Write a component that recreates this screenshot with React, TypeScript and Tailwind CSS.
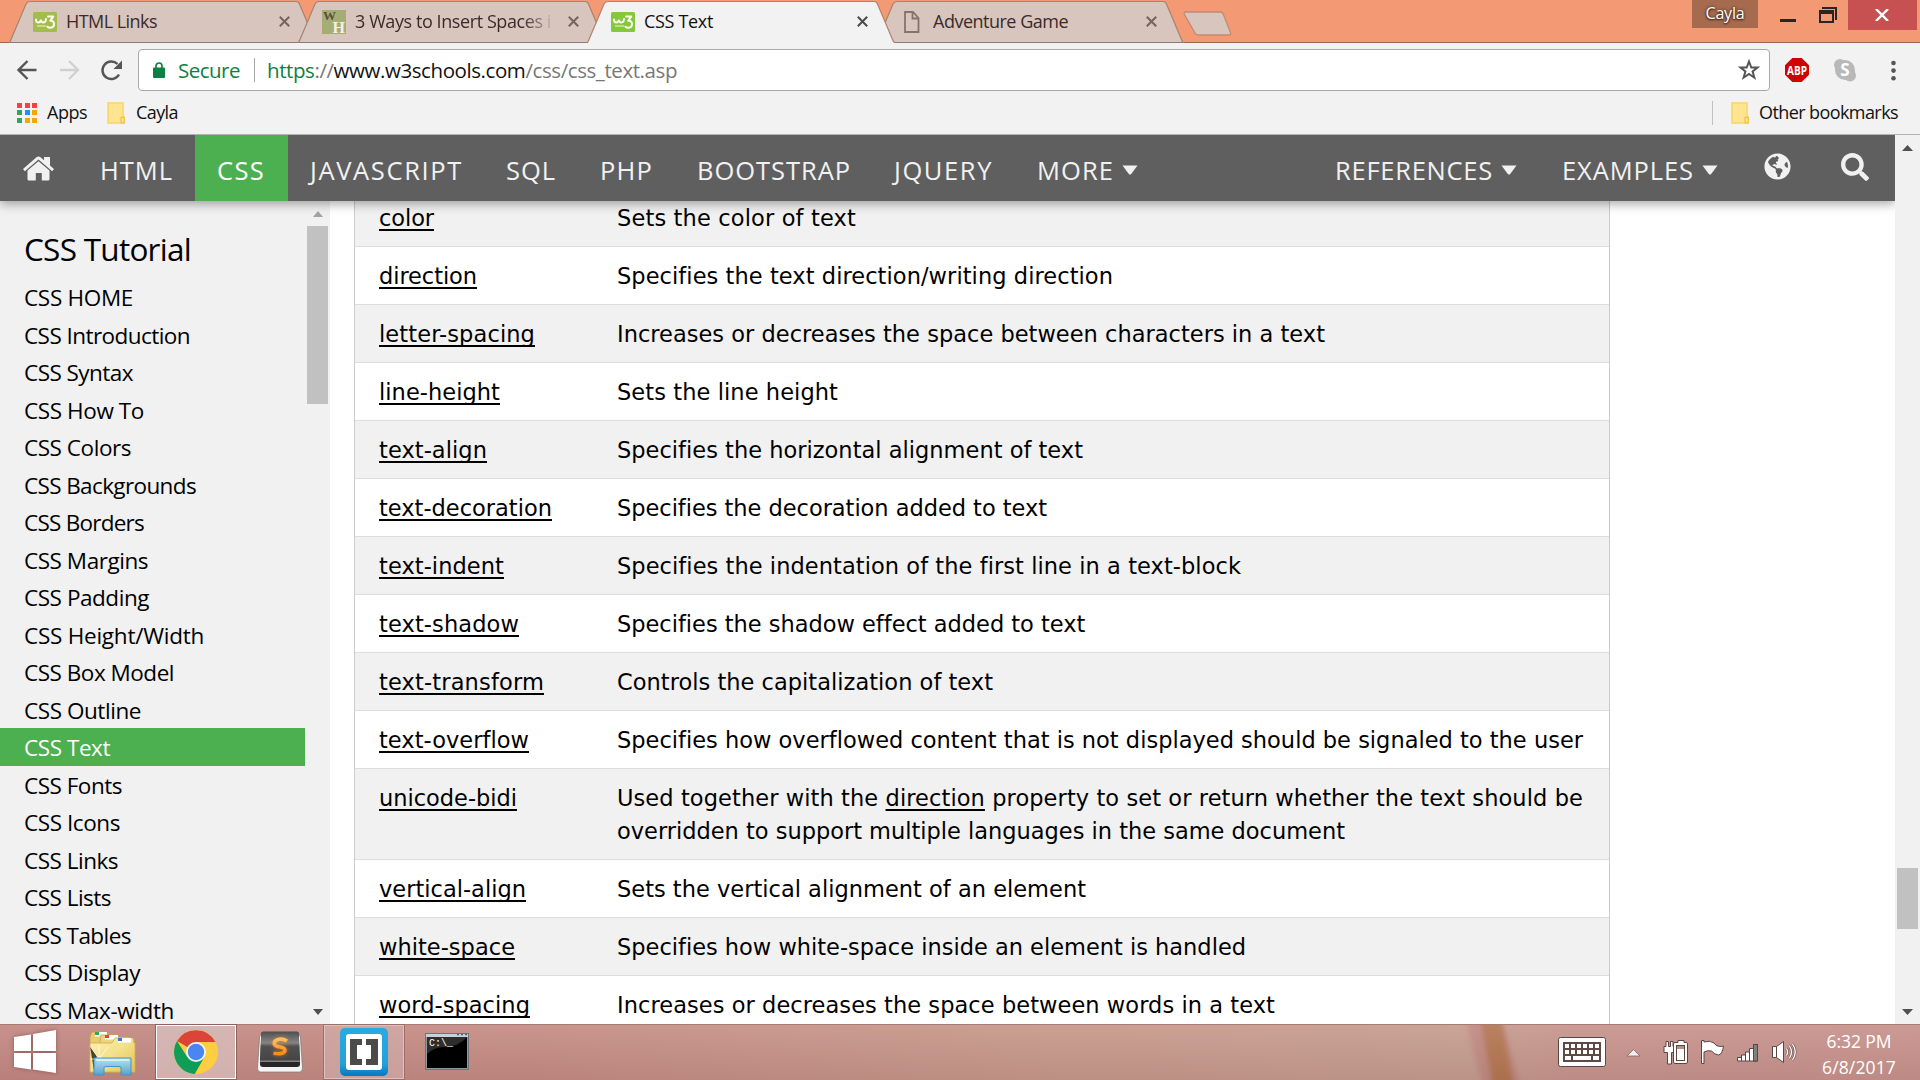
import { useLayoutEffect, useRef, useState, type ReactNode } from 'react';
import { FaSearch, FaGlobeAmericas } from 'react-icons/fa';

/* Text whose tracking is adjusted so the run is exactly w pixels wide. */
function Fit({ w, className = '', children }: { w: number; className?: string; children: ReactNode }) {
  const ref = useRef<HTMLSpanElement>(null);
  const [ls, setLs] = useState(0);
  useLayoutEffect(() => {
    const el = ref.current;
    if (!el) return;
    el.style.letterSpacing = '0px';
    const natural = el.getBoundingClientRect().width;
    const next = (w - natural) / (el.textContent || ' ').length;
    el.style.letterSpacing = `${next}px`;
    setLs(next);
  }, [w]);
  return (
    <span ref={ref} className={`inline-block whitespace-nowrap ${className}`} style={{ letterSpacing: `${ls}px` }}>
      {children}
    </span>
  );
}

function W3Icon({ faded = false }: { faded?: boolean }) {
  return (
    <svg width="24" height="20" viewBox="0 0 24 20" className="shrink-0">
      <rect width="24" height="20" rx="1.5" fill={faded ? '#a2bd4e' : '#84c83c'} />
      <path d="M3 7.5q0 3 2.2 3T8 7.7q.2 2.800 2.500 2.800T13 7" fill="none" stroke="#fffbee" strokeWidth="1.900" strokeLinecap="round" />
      <path d="M15 4.600h5.200l-3 4.200q3.800 0 3.800 3.300 0 3.600-3.600 3.600-1.800 0-3-1" fill="none" stroke="#fffbee" strokeWidth="2" strokeLinecap="round" strokeLinejoin="round" />
      <path d="M4 14h9" stroke="#fffbee" strokeWidth="1.100" opacity=".8" />
    </svg>
  );
}

function WikiIcon() {
  return (
    <div className="flex h-6 w-6 shrink-0 flex-col bg-[#a4ae73] px-px font-['Liberation_Serif'] font-bold">
      <span className="h-[11px] self-start text-[13px] leading-[11px] text-[#5c4f3c]">W</span>
      <span className="h-[13px] self-end text-[16px] leading-[13px] text-[#fbeee2]">H</span>
    </div>
  );
}

function PageIcon() {
  return (
    <svg width="24" height="24" viewBox="0 0 24 24" className="shrink-0">
      <path d="M5 2h8l5.500 6v14H5zM12.500 2v6.500h6" fill="none" stroke="#84736f" strokeWidth="1.800" />
    </svg>
  );
}

function Tab({ title, w, icon, active = false, first = false }: { title: string; w: number; icon: ReactNode; active?: boolean; first?: boolean }) {
  return (
    <div className={`relative h-[43px] w-[308px] shrink-0 ${first ? '' : '-ml-[19px]'} ${active ? 'z-10' : ''}`}>
      <svg width="308" height="43" viewBox="0 0 308 43" className="absolute inset-0">
        <path
          d="M0 43 Q1 42 2 39.500 L17 4 Q18.500 1.500 21 1.500 H287 Q289.500 1.500 290.500 4 L305.500 39.500 Q306.500 42 308 43 Z"
          fill={active ? '#f2f2f2' : '#d8c5bd'}
        />
        <path
          d="M0 43 Q1 42 2 39.500 L17 4 Q18.500 1.500 21 1.500 H287 Q289.500 1.500 290.500 4 L305.500 39.500 Q306.500 42 308 43"
          fill="none"
          stroke={active ? '#b5826d' : '#a9836f'}
          strokeWidth="1.200"
        />
        {!active && <path d="M1 42.500H307" stroke="#8f7b74" />}
      </svg>
      <div className="relative flex h-[43px] items-center pl-6">
        <div className="flex h-6 w-6 items-center">{icon}</div>
        <div className={`ml-[9px] w-[197px] overflow-hidden text-[18px] leading-[43px] ${active ? 'text-[#111]' : 'text-[#3a2b2a]'} ${w > 190 ? '[mask-image:linear-gradient(to_right,#000_168px,transparent_200px)]' : ''}`}>
          <Fit w={w}>{title}</Fit>
        </div>
        <svg width="11" height="11" viewBox="0 0 11 11" className="ml-[16px]">
          <path d="M.8.800l9.400 9.400M10.200.800L.8 10.200" stroke={active ? '#4c4c4c' : '#75635f'} strokeWidth="2" />
        </svg>
      </div>
    </div>
  );
}

function Folder() {
  return (
    <svg width="18" height="22" viewBox="0 0 18 22" className="shrink-0">
      <path d="M1 1h15v14h1.200v6H1z" fill="#ffe491" stroke="#fad55f" strokeWidth="1.500" />
      <path d="M14 20.800v-5.500h3.200v5.500z" fill="#ffe491" stroke="#eec24a" strokeWidth="1.200" />
    </svg>
  );
}

const appColors = [
  'bg-[#fa4238]', 'bg-[#fa4238]', 'bg-[#fa4238]',
  'bg-[#31a65a]', 'bg-[#2290f8]', 'bg-[#f8a50c]',
  'bg-[#31a65a]', 'bg-[#f8a50c]', 'bg-[#f8a50c]',
];

function Chrome() {
  return (
    <header className="bg-[#f2f2f2]">
      <div className="flex h-[43px] bg-[#f39973] shadow-[inset_0_-1px_0_#a0654c] pl-[9px]">
        <Tab first title="HTML Links" w={91} icon={<W3Icon faded />} />
        <Tab title="3 Ways to Insert Spaces i" w={196} icon={<WikiIcon />} />
        <Tab active title="CSS Text" w={69} icon={<W3Icon />} />
        <Tab title="Adventure Game" w={135} icon={<PageIcon />} />
        <svg width="50" height="25" viewBox="0 0 50 25" className="mt-[10.500px] ml-[-1px] shrink-0">
          <path d="M2.500 1h35q2 0 2.700 2l7.300 18.500q1 2.500-1.500 2.500H15q-2 0-3-2L1.500 3.500Q.5 1 2.500 1z" fill="#d8c5bd" stroke="#c18b74" strokeWidth="1.300" />
        </svg>
        <div className="ml-auto flex h-[30px]">
          <div className="h-7 w-[66px] bg-[#a66a4e] text-center text-[16px] leading-[27px] text-white [text-shadow:0_0_3px_#3a2015,0_1px_2px_#3a2015]">
            <Fit w={39}>Cayla</Fit>
          </div>
          <div className="ml-[22px] mt-[19px] h-[3px] w-4 bg-[#262626]" />
          <svg width="18" height="16" viewBox="0 0 18 16" className="ml-[23px] mt-[7px]">
            <path d="M3 1h14v12" fill="none" stroke="#262626" strokeWidth="2" />
            <path d="M0 3h15v13H0zM2 7v7h11V7z" fill="#262626" fillRule="evenodd" />
          </svg>
          <div className="ml-[11px] mr-[3px] flex h-[30px] w-[69px] items-center justify-center bg-[#c75050]">
            <svg width="14" height="12" viewBox="0 0 14 12" className="ml-[-1px]"><path d="M1 0l12 12M13 0L1 12" stroke="#fff" strokeWidth="2.400" /></svg>
          </div>
        </div>
      </div>

      <div className="flex h-[55px] items-start pt-[6px]">
        <svg width="138" height="42" viewBox="0 0 138 42" fill="none" className="shrink-0">
          <path d="M36.500 21H18.500M27.500 12l-9 9 9 9" stroke="#555" strokeWidth="2.400" />
          <path d="M60 21h18M69 12l9 9-9 9" stroke="#d0d0d0" strokeWidth="2.400" />
          <path d="M119 25.500A8.800 8.800 0 1 1 117.500 15" stroke="#555" strokeWidth="2.400" />
          <path d="M122 11.500v8.500h-8.500z" fill="#555" />
        </svg>
        <div className="flex h-[42px] w-[1632px] items-center rounded-[4px] border border-[#a9a9a9] bg-white text-[20.500px] leading-[40px]">
          <svg width="12" height="16" viewBox="0 0 12 16" className="ml-[14px]">
            <path d="M3 7V4a3 3 0 0 1 6 0v3" fill="none" stroke="#0b8043" strokeWidth="1.700" />
            <rect y="5.500" width="12" height="10.500" rx="1" fill="#0b8043" />
          </svg>
          <Fit w={62} className="ml-[13px] text-[#0b8043]">Secure</Fit>
          <div className="ml-[14px] h-6 w-px bg-[#a8a8a8]" />
          <Fit w={410} className="ml-[12px] text-[#777]">
            <span className="text-[#0b8043]">https</span>://<span className="text-[#111]">www.w3schools.com</span>/css/css_text.asp
          </Fit>
          <svg width="22" height="22" viewBox="0 0 22 22" className="ml-auto mr-[9px]">
            <path d="M11 2.500l2.300 6h6.200l-4.900 3.900 1.800 6.300L11 15l-5.400 3.700 1.800-6.300L2.500 8.500h6.200z" fill="none" stroke="#555" strokeWidth="2" />
          </svg>
        </div>
        <svg width="150" height="42" viewBox="0 0 150 42" className="shrink-0">
          <path d="M22.300 9h9.400l7.300 7.300v9.400L31.700 33h-9.400L15 25.700v-9.400z" fill="#cf0202" />
          <text x="27" y="26" textAnchor="middle" textLength="20" lengthAdjust="spacingAndGlyphs" fontSize="13" fontWeight="700" fontFamily="Open Sans, sans-serif" fill="#fff">ABP</text>
          <circle cx="75" cy="21" r="10" fill="#b8b8b8" />
          <circle cx="70" cy="16" r="6" fill="#b8b8b8" />
          <circle cx="80" cy="26.500" r="6" fill="#b8b8b8" />
          <text x="75" y="27" textAnchor="middle" fontSize="17" fontWeight="700" fontFamily="Open Sans, sans-serif" fill="#fff">S</text>
          <circle cx="123.500" cy="14" r="2.300" fill="#555" />
          <circle cx="123.500" cy="21.600" r="2.300" fill="#555" />
          <circle cx="123.500" cy="29.200" r="2.300" fill="#555" />
        </svg>
      </div>

      <div className="flex h-[37px] items-center border-b border-[#b3b3b3] pb-[7px] text-[18px] leading-[26px] text-[#111]">
        <div className="ml-[17px] grid grid-cols-3 gap-x-[2.500px] gap-y-[2.500px]">
          {appColors.map((c, i) => <div key={i} className={`h-[5px] w-[5px] ${c}`} />)}
        </div>
        <Fit w={40} className="ml-[10px] mb-[2px]">Apps</Fit>
        <div className="ml-[20px] flex items-center gap-[11px]"><Folder /><Fit w={42} className="mb-[2px]">Cayla</Fit></div>
        <div className="ml-auto mr-[22px] flex items-center">
          <div className="mr-[18px] h-6 w-px bg-[#c0c0c0]" />
          <Folder />
          <Fit w={139} className="ml-[10px] mb-[2px]">Other bookmarks</Fit>
        </div>
      </div>
    </header>
  );
}

function Caret() {
  return (
    <svg width="16" height="10" viewBox="0 0 16 10" className="mt-[-1px] shrink-0">
      <path d="M.5.500h15L9 9.200q-1 .8-2 0z" fill="#f1f1f1" />
    </svg>
  );
}

function NavItem({ label, box, w, active, caret }: { label: string; box: string; w: number; active?: boolean; caret?: boolean }) {
  return (
    <div className={`flex h-[66px] shrink-0 items-center gap-[8px] pl-[22px] pt-[5px] ${box} ${active ? 'bg-[#4caf50] text-white' : ''}`}>
      <Fit w={w}>{label}</Fit>
      {caret && <Caret />}
    </div>
  );
}

function Nav() {
  return (
    <nav className="relative z-20 flex h-[66px] w-[1895px] bg-[#5f5f5f] text-[25.500px] leading-[61px] text-[#f1f1f1] shadow-[0_3px_10px_rgba(0,0,0,0.350)]">
      <div className="w-[78px] shrink-0 pl-[23px] pt-[21px]">
        <svg width="31" height="25" viewBox="0 0 31 25" fill="#f1f1f1">
          <path d="M0 13L13.500 1.200q2-1.600 4 0L21 4.200V1h6v8.500L31 13l-1.800 2.200L15.500 3.500 1.800 15.200z" />
          <path d="M4.500 14.500L15.500 5.300l11 9.200V23q0 1.500-1.500 1.500h-6.200V17h-6v7.500H6q-1.500 0-1.500-1.500z" />
        </svg>
      </div>
      <NavItem label="HTML" box="w-[117px]" w={73} />
      <NavItem label="CSS" box="w-[93px]" w={48} active />
      <NavItem label="JAVASCRIPT" box="w-[196px]" w={153} />
      <NavItem label="SQL" box="w-[94px]" w={50} />
      <NavItem label="PHP" box="w-[97px]" w={53} />
      <NavItem label="BOOTSTRAP" box="w-[197px]" w={154} />
      <NavItem label="JQUERY" box="w-[143px]" w={99} />
      <NavItem label="MORE" box="w-[150px]" w={77} caret />
      <NavItem label="REFERENCES" box="ml-auto w-[227px]" w={158} caret />
      <NavItem label="EXAMPLES" box="w-[183px]" w={132} caret />
      <FaGlobeAmericas className="ml-[41px] mt-[18px] h-[27px] w-[27px]" />
      <FaSearch className="ml-[50px] mr-[26px] mt-[18px] h-[28px] w-[28px]" />
    </nav>
  );
}

const lessons: [string, number][] = [
  ['CSS HOME', 109], ['CSS Introduction', 166], ['CSS Syntax', 109], ['CSS How To', 120], ['CSS Colors', 107],
  ['CSS Backgrounds', 172], ['CSS Borders', 120], ['CSS Margins', 124], ['CSS Padding', 125], ['CSS Height/Width', 180],
  ['CSS Box Model', 150], ['CSS Outline', 117], ['CSS Text', 86], ['CSS Fonts', 98], ['CSS Icons', 96], ['CSS Links', 94],
  ['CSS Lists', 87], ['CSS Tables', 107], ['CSS Display', 116], ['CSS Max-width', 150],
];

function Sidebar() {
  return (
    <aside className="flex h-[823px] w-[330px] shrink-0 overflow-hidden bg-[#f1f1f1]">
      <div className="w-[305px] shrink-0 pt-[22px] text-black">
        <h2 className="h-[55px] pl-6 text-[31.500px] leading-[52px]"><Fit w={167}>CSS Tutorial</Fit></h2>
        {lessons.map(([label, w]) => (
          <div key={label} className={`h-[37.500px] pl-6 text-[22.500px] leading-[39.500px] ${label === 'CSS Text' ? 'bg-[#4caf50] text-white' : ''}`}>
            <Fit w={w}>{label}</Fit>
          </div>
        ))}
      </div>
      <div className="flex w-[25px] flex-col items-center pt-[10px] pb-[9px]">
        <svg width="10" height="6" viewBox="0 0 10 6"><path d="M0 6L5 0l5 6z" fill="#a3a3a3" /></svg>
        <div className="mt-[9px] h-[178px] w-[21px] shrink-0 bg-[#c1c1c1]" />
        <svg width="10" height="6" viewBox="0 0 10 6" className="mt-auto"><path d="M0 0h10L5 6z" fill="#505050" /></svg>
      </div>
    </aside>
  );
}

const link = 'underline decoration-2 underline-offset-[3px] [text-decoration-skip-ink:none]';

const rows: [string, number, string, number][] = [
  ['color', 55, 'Sets the color of text', 239],
  ['direction', 98, 'Specifies the text direction/writing direction', 496],
  ['letter-spacing', 156, 'Increases or decreases the space between characters in a text', 708],
  ['line-height', 121, 'Sets the line height', 221],
  ['text-align', 108, 'Specifies the horizontal alignment of text', 466],
  ['text-decoration', 173, 'Specifies the decoration added to text', 430],
  ['text-indent', 125, 'Specifies the indentation of the first line in a text-block', 624],
  ['text-shadow', 140, 'Specifies the shadow effect added to text', 468],
  ['text-transform', 165, 'Controls the capitalization of text', 376],
  ['text-overflow', 150, 'Specifies how overflowed content that is not displayed should be signaled to the user', 966],
  ['unicode-bidi', 138, '', 0],
  ['vertical-align', 147, 'Sets the vertical alignment of an element', 469],
  ['white-space', 136, 'Specifies how white-space inside an element is handled', 629],
  ['word-spacing', 151, 'Increases or decreases the space between words in a text', 658],
];

function PropertyTable() {
  return (
    <div className="-mt-[12px] ml-6 w-[1256px] shrink-0 border-x border-[#ccc] font-['DejaVu_Sans',sans-serif] text-[22.500px] leading-[33px] text-black">
      {rows.map(([name, nw, desc, dw], i) => (
        <div key={name} className={`flex border-b border-[#ddd] pt-[13px] pb-[11px] pl-6 ${i % 2 === 0 ? 'bg-[#f1f1f1]' : 'bg-white'}`}>
          <div className="w-[238px] shrink-0"><Fit w={nw} className={link}>{name}</Fit></div>
          {desc ? (
            <Fit w={dw}>{desc}</Fit>
          ) : (
            <div className="flex flex-col">
              <Fit w={966}>
                Used together with the <span className={link}>direction</span> property to set or return whether the text should be
              </Fit>
              <Fit w={728} className="self-start">overridden to support multiple languages in the same document</Fit>
            </div>
          )}
        </div>
      ))}
    </div>
  );
}

function StartIcon() {
  return (
    <svg width="46" height="46" viewBox="0 0 46 46" className="drop-shadow-[0_0_2px_rgba(90,40,40,0.500)]">
      <path d="M2 8l17-2.500V22H2zM21 5l23-4v21H21zM2 24h17v16.500L2 38zM21 24h23v20l-23-3.500z" fill="#fff" />
    </svg>
  );
}

function ExplorerIcon() {
  return (
    <svg width="48" height="46" viewBox="0 0 48 46">
      <defs>
        <linearGradient id="fold" x1="0" y1="0" x2="1" y2="1"><stop offset="0" stopColor="#fff0b0" /><stop offset=".5" stopColor="#f3e08a" /><stop offset="1" stopColor="#e3c050" /></linearGradient>
        <linearGradient id="stand" x1="0" y1="0" x2="0" y2="1"><stop offset="0" stopColor="#b6e2ee" /><stop offset="1" stopColor="#4ca4d8" /></linearGradient>
      </defs>
      <path d="M2 42V7l2-5h14l3 5h20v35z" fill="#e8cd70" stroke="#c7a34a" strokeWidth=".8" />
      <rect x="7" y="2" width="12" height="4.500" fill="#fff" /><rect x="7" y="2" width="4" height="3" fill="#35a853" />
      <path d="M12 11l1-6h14l2 4h17v9H12z" fill="#edd57e" stroke="#c7a34a" strokeWidth=".8" />
      <rect x="17" y="5" width="13" height="4.500" fill="#fff" /><rect x="17" y="5" width="4" height="3" fill="#e8432e" />
      <path d="M2 13h22l3-5h18l1 5h1v29H2z" fill="url(#fold)" stroke="#cfae52" strokeWidth=".8" />
      <rect x="30" y="8" width="13" height="4.500" fill="#fff" /><rect x="30" y="8" width="4" height="3" fill="#2c7fd0" />
      <path d="M2 16L11 29 6 41M11 29L20 17M11 29L11 15M11 29H2" stroke="#fff" strokeWidth=".9" opacity=".7" />
      <circle cx="11" cy="29" r="3" fill="#fff" opacity=".7" />
      <path d="M6 28h37v17H33v-7q0-1.500-2-1.500H18q-2 0-2 1.500v7H6z" fill="url(#stand)" stroke="#3e93c4" strokeWidth="1" opacity=".95" />
      <path d="M8 30h33" stroke="#e4f7fa" strokeWidth="1.500" />
    </svg>
  );
}

function ChromeIcon() {
  return (
    <svg width="44" height="44" viewBox="0 0 44 44">
      <circle cx="22" cy="22" r="22" fill="#ffcd40" />
      <path d="M22 22L3 11A22 22 0 0 1 41.500 12H22z" fill="#db4437" />
      <path d="M3 11A22 22 0 0 0 21 44L30.700 27 22 22 13.300 27z" fill="#0f9d58" />
      <path d="M22 12h19.500l-11 15L21 44a22 22 0 0 0 19.500-32z" fill="#ffcd40" />
      <circle cx="22" cy="22" r="10" fill="#f4f4f4" />
      <circle cx="22" cy="22" r="8.200" fill="#4a86f0" />
    </svg>
  );
}

function SublimeIcon() {
  return (
    <svg width="46" height="42" viewBox="0 0 46 42">
      <defs>
        <linearGradient id="key" x1="0" y1="0" x2="0" y2="1"><stop offset="0" stopColor="#505050" /><stop offset=".38" stopColor="#858585" /><stop offset=".5" stopColor="#505050" /><stop offset="1" stopColor="#444" /></linearGradient>
        <linearGradient id="ess" x1="0" y1="0" x2="0" y2="1"><stop offset="0" stopColor="#ffbe62" /><stop offset="1" stopColor="#ff8a10" /></linearGradient>
      </defs>
      <path d="M4 4h38q1.200 0 1.400 2L45.500 37q0 4-3 4H3.500q-3 0-3-4L2.600 6Q2.800 4 4 4z" fill="#f4f4f4" stroke="#777" strokeWidth=".7" />
      <path d="M6 .800h34q1.700 0 1.800 2L43 33q0 3-3 3H6q-3 0-3-3L4.200 2.800Q4.300.8 6 .800z" fill="#262626" />
      <path d="M6 .800h34q1.700 0 1.800 2L42.800 30H3.200L4.200 2.800Q4.300.8 6 .800z" fill="url(#key)" />
      <path d="M3.200 30.200h39.600" stroke="#aaa" strokeWidth="1" />
      <path d="M30 10q-4.500-2.800-9-1.500-4.200 1.500-3.700 4.500.5 2.200 5.500 3 5.500.9 5.200 3.700-.8 4.200-11.500 2.500" fill="none" stroke="url(#ess)" strokeWidth="3.600" className="drop-shadow-[0_0_2px_rgba(255,140,30,0.600)]" />
    </svg>
  );
}

function BracketsIcon() {
  return (
    <svg width="48" height="48" viewBox="0 0 48 48">
      <defs><linearGradient id="br" x1="0" y1="0" x2="0" y2="1"><stop offset="0" stopColor="#29abe2" /><stop offset=".75" stopColor="#22a0da" /><stop offset="1" stopColor="#0a76bd" /></linearGradient></defs>
      <rect width="48" height="48" rx="5" fill="url(#br)" />
      <rect x="6" y="6" width="36" height="36" rx="3" fill="#fff" />
      <path d="M10 11h12v6h-5v14h5v6H10zM38 11H26v6h5v14h-5v6h12z" fill="#4b4b4b" />
    </svg>
  );
}

function TerminalIcon() {
  return (
    <svg width="44" height="37" viewBox="0 0 44 37">
      <rect x=".5" y=".5" width="43" height="36" fill="#8e979c" stroke="#6f7478" />
      <rect x="1" y="1" width="42" height="3" fill="#c5d3dc" />
      <path d="M32 1.500h2M36 1.500h2M40 1.500h2" stroke="#52606a" strokeWidth="1.500" />
      <rect x="2" y="4" width="40" height="31" fill="#000" />
      <path d="M2 4h40Q34 14 18 14 8 15 2 21z" fill="#2d2d2d" />
      <text x="4" y="13" fontSize="10" fontFamily="Liberation Mono, monospace" fill="#fff" textLength="24">C:\_</text>
    </svg>
  );
}

function Tray() {
  return (
    <svg width="240" height="32" viewBox="0 0 240 32" className="shrink-0">
      <rect x=".5" y="1.500" width="47" height="29" rx="2" fill="#fff" stroke="#5c4541" />
      <rect x="5" y="6" width="38" height="20" fill="#5f4945" />
      {[0, 1, 2, 3, 4, 5].map((i) => <rect key={i} x={7 + i * 6} y="8" width="4" height="4" fill="#fff" />)}
      {[0, 1, 2, 3, 4, 5].map((i) => <rect key={i} x={7 + i * 6} y="14" width="4" height="4" fill="#fff" />)}
      <path d="M7 20h6v4H7zM15 20h18v4H15zM35 20h6v4h-6z" fill="#fff" />
      <path d="M69 20l6.500-6.500 6.500 6.500z" fill="#f2eef0" stroke="#80646a" strokeWidth=".8" />
      <path d="M108 5.500h2.500v5h2v-5h2.500v5h2v6h-3.500v11.500h-4V16.500h-3.500v-6h2z" fill="#fff" stroke="#5c4541" />
      <path d="M120 4.500h6v2h2.500q1 0 1 1.500v18q0 1.500-1.500 1.500H117q-1.500 0-1.500-1.500V8q0-1.500 1.500-1.500h3z" fill="#fff" stroke="#5c4541" />
      <rect x="118.500" y="9.500" width="8" height="15" fill="#fff" stroke="#5c4541" /><rect x="119" y="10" width="7" height="3" fill="#b98c86" />
      <path d="M143.500 4.500h2.500v1.500q6-2 10 1 2 3 4 3 3 1 5.500 0-1 8-5 9-4-.5-7-4-4-1-7.500 1v11.500h-2.500z" fill="#fff" stroke="#5c4541" />
      <path d="M179.500 21.500h4v-2.500h4v-3h4v-3.500h4v-4h4v16.500h-20z" fill="#fff" stroke="#5c4541" />
      <path d="M183.500 21v4M187.500 18v7M191.500 15v10" stroke="#5c4541" />
      <rect x="195.500" y="8.500" width="4" height="16.500" fill="#808080" stroke="#5c4541" />
      <path d="M214.500 10.500h4l7-5v21l-7-5h-4z" fill="#fff" stroke="#5c4541" />
      <path d="M218.500 10.500v11" stroke="#5c4541" />
      <path d="M228.500 12.500q2 3.500 0 7M231.500 10q4 6 0 12M234.500 8q5.500 8 0 16" fill="none" stroke="#715650" strokeWidth="2.600" />
      <path d="M228.500 12.500q2 3.500 0 7M231.500 10q4 6 0 12M234.500 8q5.500 8 0 16" fill="none" stroke="#fff" strokeWidth="1.300" />
    </svg>
  );
}

function Taskbar() {
  return (
    <footer className="relative flex h-14 shrink-0 items-center overflow-hidden bg-[linear-gradient(90deg,#c08781_0%,#c28b83_28%,#c49889_55%,#c39d8f_76%,#c4938c_82%,#c5918b_100%)]">
      <svg width="80" height="56" viewBox="0 0 80 56" className="absolute left-[1455px] top-0">
        <defs><filter id="soft" x="-50%" y="-10%" width="200%" height="120%"><feGaussianBlur stdDeviation="2.500" /></filter></defs>
        <path d="M10 -6h36l20 68H28z" fill="#b97a77" opacity=".55" filter="url(#soft)" />
        <path d="M25 -6h21l13 68H38z" fill="#b07450" filter="url(#soft)" />
      </svg>
      <div className="absolute inset-0 border-t border-[#a97b76] bg-[linear-gradient(180deg,rgba(255,220,215,0.120),rgba(120,70,70,0.100))]" />
      <div className="relative flex h-full flex-1 items-center">
        <div className="ml-[12px]"><StartIcon /></div>
        <div className="ml-[30px] mt-[1px]"><ExplorerIcon /></div>
        <div className="ml-[19px] flex h-14 w-[82px] items-center justify-center border border-[#8d6360]">
          <div className="flex h-[54px] w-[80px] items-center justify-center border border-white bg-[#d9c2c0]/75"><ChromeIcon /></div>
        </div>
        <div className="ml-[20px] mt-[-1px]"><SublimeIcon /></div>
        <div className="ml-[20px] flex h-14 w-[82px] items-center justify-center border border-[#9d6f6b]">
          <div className="flex h-[54px] w-[80px] items-center justify-center border border-[#dfc0be] bg-[#d3b3b0]/60"><BracketsIcon /></div>
        </div>
        <div className="ml-[20px] mt-[-1px]"><TerminalIcon /></div>
        <div className="ml-auto"><Tray /></div>
        <div className="flex w-[122px] flex-col items-center pt-[4px] text-[17.500px] leading-[26px] text-white">
          <Fit w={65}>6:32 PM</Fit>
          <Fit w={74}>6/8/2017</Fit>
        </div>
      </div>
    </footer>
  );
}

export default function App() {
  return (
    <div className="flex h-[1080px] w-[1920px] flex-col overflow-hidden bg-white font-['Open_Sans','Noto_Sans',sans-serif]">
      <Chrome />
      <main className="flex h-[889px] shrink-0 overflow-hidden">
        <div className="flex w-[1895px] shrink-0 flex-col">
          <Nav />
          <div className="flex h-[823px] overflow-hidden">
            <Sidebar />
            <PropertyTable />
          </div>
        </div>
        <div className="relative z-30 flex w-[25px] flex-col items-center bg-[#f1f1f1] pt-[10px] pb-[9px]">
          <svg width="11" height="6" viewBox="0 0 11 6"><path d="M0 6L5.500 0 11 6z" fill="#505050" /></svg>
          <div className="mt-[717px] h-[61px] w-[21px] shrink-0 bg-[#c1c1c1]" />
          <svg width="11" height="6" viewBox="0 0 11 6" className="mt-auto"><path d="M0 0h11L5.500 6z" fill="#505050" /></svg>
        </div>
      </main>
      <Taskbar />
    </div>
  );
}
